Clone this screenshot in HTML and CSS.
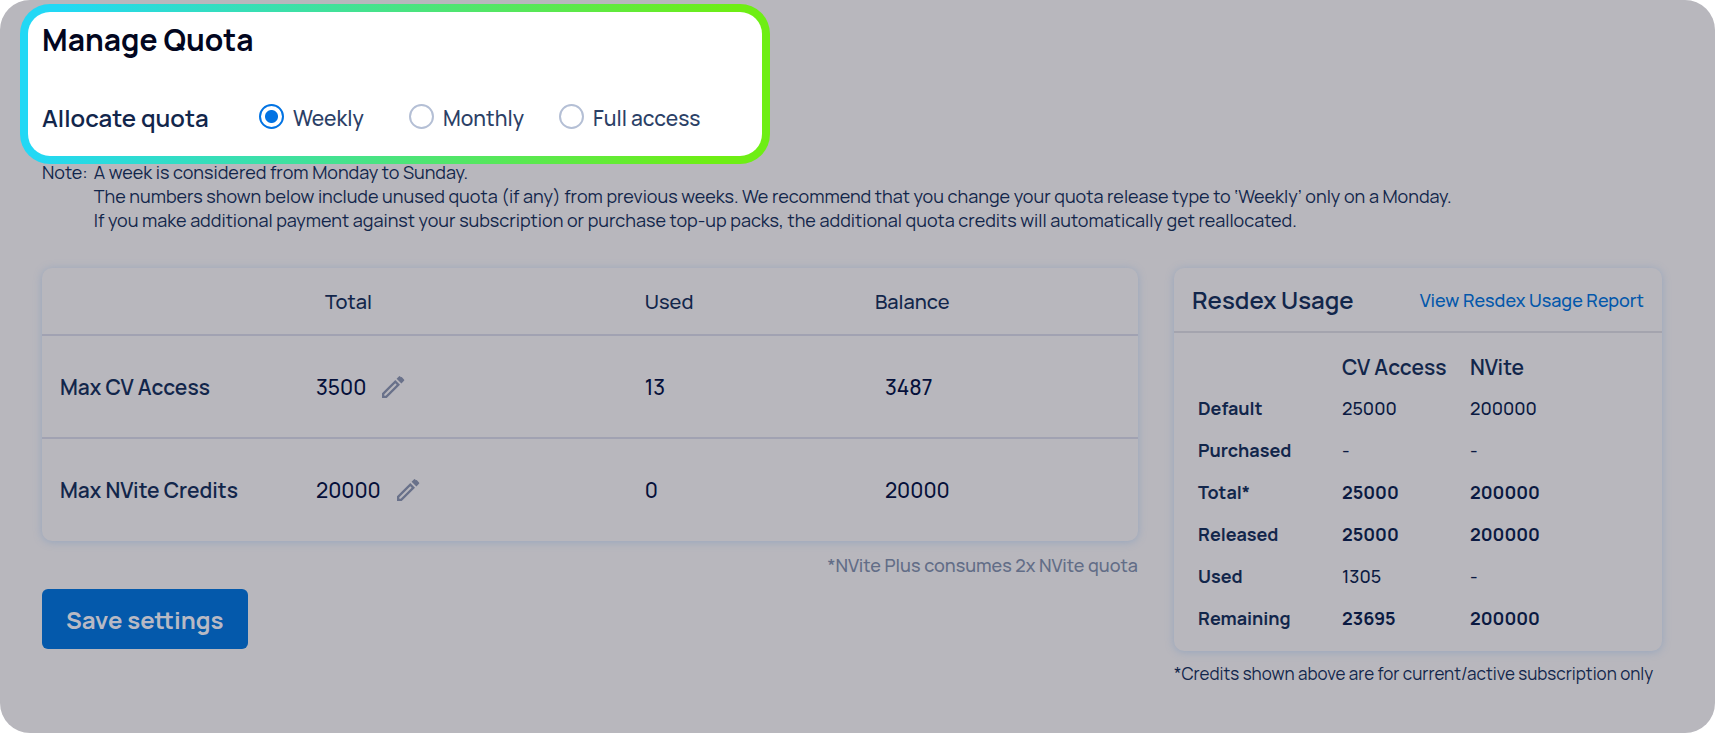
FILE: index.html
```html
<!DOCTYPE html>
<html lang="en">
<head>
    <meta charset="UTF-8">
    <title>Manage Quota</title>
    <meta name="viewport" content="width=device-width, initial-scale=1.0">
    <link rel="stylesheet" href="styles.css">
</head>
<body>
    <main class="page">
        <form class="quota-form">
            <section class="highlight">
                <h1>Manage Quota</h1>
                <div class="allocate" role="radiogroup" aria-labelledby="allocate-label">
                    <span class="allocate-label" id="allocate-label">Allocate quota</span>
                    <div class="options">
                        <label class="option"><input type="radio" name="quota" value="weekly" checked>Weekly</label>
                        <label class="option"><input type="radio" name="quota" value="monthly">Monthly</label>
                        <label class="option"><input type="radio" name="quota" value="full">Full access</label>
                    </div>
                </div>
            </section>

            <div class="note">
                <span>Note:</span>
                <div>
                    <p>A week is considered from Monday to Sunday.</p>
                    <p>The numbers shown below include unused quota (if any) from previous weeks. We recommend that you change your quota release type to ‘Weekly’ only on a Monday.</p>
                    <p>If you make additional payment against your subscription or purchase top-up packs, the additional quota credits will automatically get reallocated.</p>
                </div>
            </div>

            <div class="columns">
                <div class="left">
                    <div class="card">
                        <table class="quota-table">
                            <thead>
                                <tr>
                                    <th class="col-name"></th>
                                    <th class="col-total">Total</th>
                                    <th class="col-used">Used</th>
                                    <th class="col-balance">Balance</th>
                                </tr>
                            </thead>
                            <tbody>
                                <tr>
                                    <th>Max CV Access</th>
                                    <td>
                                        <div class="editable">3500
                                            <button type="button" class="edit" aria-label="Edit Max CV Access">
                                                <svg viewBox="0 0 26 26"><path d="M2 19.300V24h4.700L20 10.700 15.300 6zM4.300 21.700v-1.400L15.300 9.300l1.400 1.400L5.700 21.700zM16.600 4.700l2.300-2.300q.7-.7 1.400 0l.5.9.9-.2 2.300 2.300q.7.7 0 1.400l-2.600 2.600z" fill-rule="evenodd"/></svg>
                                            </button>
                                        </div>
                                    </td>
                                    <td>13</td>
                                    <td class="balance">3487</td>
                                </tr>
                                <tr>
                                    <th>Max NVite Credits</th>
                                    <td>
                                        <div class="editable">20000
                                            <button type="button" class="edit" aria-label="Edit Max NVite Credits">
                                                <svg viewBox="0 0 26 26"><path d="M2 19.300V24h4.700L20 10.700 15.300 6zM4.300 21.700v-1.400L15.300 9.300l1.400 1.400L5.700 21.700zM16.600 4.700l2.300-2.300q.7-.7 1.400 0l.5.9.9-.2 2.300 2.300q.7.7 0 1.400l-2.600 2.600z" fill-rule="evenodd"/></svg>
                                            </button>
                                        </div>
                                    </td>
                                    <td>0</td>
                                    <td class="balance">20000</td>
                                </tr>
                            </tbody>
                        </table>
                    </div>
                    <p class="hint">*NVite Plus consumes 2x NVite quota</p>
                    <button type="submit" class="save">Save settings</button>
                </div>

                <aside class="right">
                    <div class="card usage-card">
                        <div class="usage-head">
                            <h2>Resdex Usage</h2>
                            <a href="#">View Resdex Usage Report</a>
                        </div>
                        <table class="usage-table">
                            <thead>
                                <tr><th class="col-label"></th><th class="col-cv">CV Access</th><th>NVite</th></tr>
                            </thead>
                            <tbody>
                                <tr><th>Default</th><td>25000</td><td>200000</td></tr>
                                <tr><th>Purchased</th><td>-</td><td>-</td></tr>
                                <tr class="strong"><th>Total*</th><td>25000</td><td>200000</td></tr>
                                <tr class="strong"><th>Released</th><td>25000</td><td>200000</td></tr>
                                <tr><th>Used</th><td>1305</td><td>-</td></tr>
                                <tr class="strong"><th>Remaining</th><td>23695</td><td>200000</td></tr>
                            </tbody>
                        </table>
                    </div>
                    <p class="credits">*Credits shown above are for current/active subscription only</p>
                </aside>
            </div>
        </form>
    </main>
</body>
</html>
```
FILE: styles.css
```css
* {
    box-sizing: border-box;
}

body {
    margin: 0;
    background-color: #fff;
    font-family: Manrope, Inter, sans-serif;
    font-size: 18px;
    line-height: 24px;
    color: #12264b;
}

h1, h2, p {
    margin: 0;
}

.page {
    padding: 4px 53px 47px 42px;
    background-color: #b8b7bd;
    border-radius: 30px;
}

/* highlighted block with gradient frame */
.highlight {
    width: 750px;
    max-width: 100%;
    height: 160px;
    margin-left: -22px;
    padding: 12px 14px;
    border: 8px solid transparent;
    border-radius: 30px;
    background: linear-gradient(#fff, #fff) padding-box,
                linear-gradient(100deg, #22d8f5 5%, #6eee14 92%) border-box;
}

h1 {
    font-size: 30px;
    line-height: 32px;
    font-weight: 700;
    color: #020620;
}

.allocate {
    display: flex;
    align-items: center;
    margin-top: 45px;
}

.allocate-label {
    width: 217px;
    font-size: 24px;
    line-height: 34px;
    font-weight: 600;
}

.options {
    display: grid;
    grid-template-columns: repeat(3, 150px);
}

.option {
    display: flex;
    align-items: flex-start;
    gap: 9px;
    font-size: 21px;
    line-height: 28px;
    font-weight: 500;
    color: #2b4066;
    white-space: nowrap;
    cursor: pointer;
}

.option input {
    appearance: none;
    width: 25px;
    height: 25px;
    margin: 0;
    border: 2px solid #b4bfd5;
    border-radius: 50%;
    background-color: #fff;
}

.option input:checked {
    border-color: #0273e3;
    background: radial-gradient(circle, #0273e3 6px, #fff 7px);
}

.note {
    display: flex;
    gap: 6px;
    margin-top: -4px;
}

.columns {
    display: grid;
    grid-template-columns: 1fr 488px;
    gap: 36px;
    margin-top: 36px;
}

.card {
    border-radius: 10px;
    background-color: #b8b7bd;
    box-shadow: 0 1px 8px #96a5bd;
}

table {
    width: 100%;
    border-collapse: collapse;
    table-layout: fixed;
}

th, td {
    padding: 0;
    text-align: left;
}

.quota-table {
    font-size: 21px;
}

.quota-table tr {
    height: 103px;
}

.quota-table thead tr {
    height: 67px;
}

.quota-table tbody tr {
    border-top: 2px solid #a1a2b2;
}

.quota-table thead th {
    padding-top: 2px;
    font-size: 20px;
    font-weight: 500;
}

.quota-table tbody th {
    padding-left: 18px;
    font-weight: 600;
}

.quota-table td {
    font-weight: 500;
    color: #05103a;
}

.col-name {
    width: 25%;
}

.quota-table .col-total {
    width: 30%;
    padding-left: 9px;
}

.col-used {
    width: 21%;
}

.quota-table .balance {
    padding-left: 10px;
}

.editable {
    display: flex;
    align-items: center;
    gap: 14px;
}

.edit {
    width: 26px;
    height: 26px;
    padding: 0;
    border: none;
    background: none;
    cursor: pointer;
}

.edit svg {
    display: block;
    fill: #69718a;
}

.hint {
    margin-top: 12px;
    text-align: right;
    font-weight: 500;
    color: #626d87;
}

.save {
    height: 60px;
    margin-top: 12px;
    padding: 0 24px;
    border: none;
    border-radius: 6px;
    background-color: #0459ab;
    color: #b8b9c4;
    font-family: inherit;
    font-size: 24px;
    font-weight: 700;
    cursor: pointer;
}

.usage-card {
    padding-bottom: 12px;
}

.usage-head {
    display: flex;
    justify-content: space-between;
    align-items: center;
    height: 65px;
    padding: 0 18px;
    border-bottom: 2px solid #a4a4ae;
}

h2 {
    font-size: 24px;
    font-weight: 600;
}

.usage-head a {
    font-weight: 500;
    color: #0458ab;
    text-decoration: none;
}

.usage-table th:first-child {
    padding-left: 24px;
}

.usage-table tr {
    height: 42px;
}

.usage-table thead tr {
    height: 54px;
}

.usage-table thead th {
    padding-top: 14px;
    font-size: 21px;
    font-weight: 600;
}

.usage-table .col-label {
    width: 168px;
}

.usage-table .col-cv {
    width: 128px;
}

.usage-table tbody th {
    font-weight: 700;
}

.usage-table td {
    font-weight: 500;
    color: #0b1a42;
}

.usage-table .strong td {
    font-weight: 700;
}

.credits {
    margin-top: 11px;
    font-size: 17px;
    white-space: nowrap;
}
```
